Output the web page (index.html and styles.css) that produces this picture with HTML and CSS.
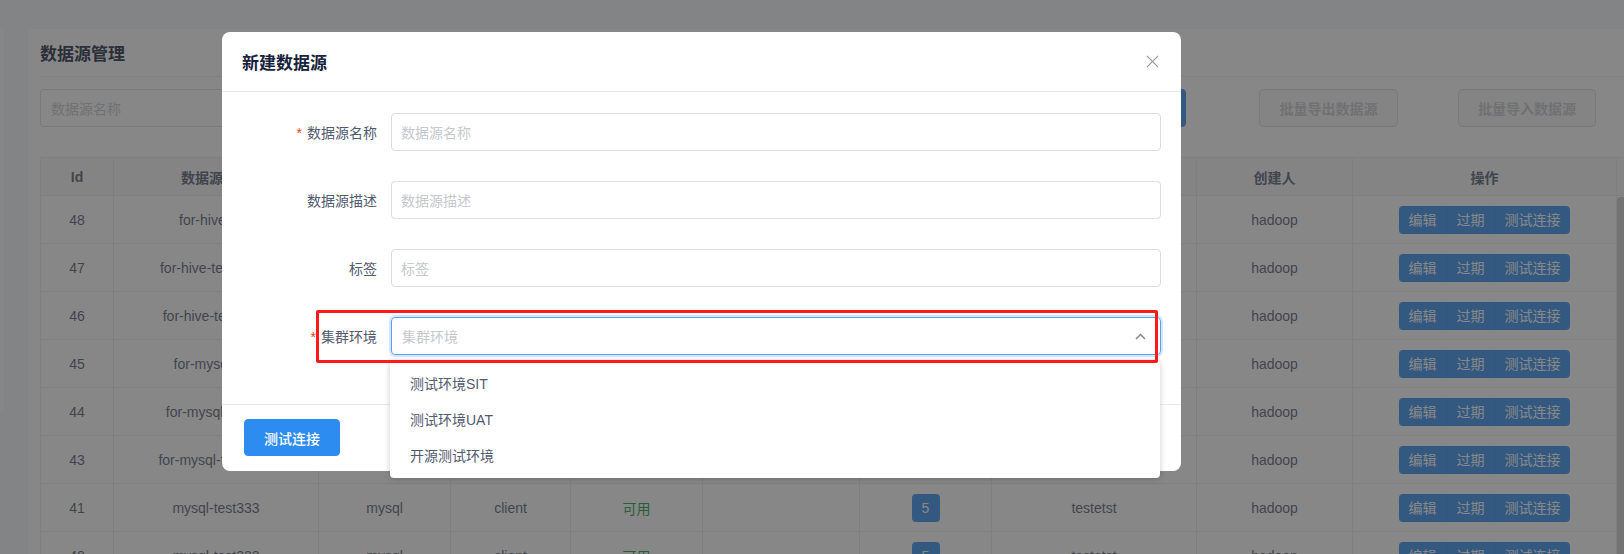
FILE: index.html
```html
<!DOCTYPE html>
<html lang="zh-CN">
<head>
<meta charset="utf-8">
<title>数据源管理</title>
<link rel="stylesheet" href="styles.css">
</head>
<body>
<div class="page">
  <aside class="side"></aside>
  <main class="card">
    <div class="card-head"><h2 class="card-title">数据源管理</h2></div>
    <div class="toolbar">
      <div class="search-input">数据源名称</div>
      <button class="btn btn-primary search-btn">查询</button>
      <button class="btn btn-disabled export-btn">批量导出数据源</button>
      <button class="btn btn-disabled import-btn">批量导入数据源</button>
    </div>
    <div class="table">
      <div class="tr thead">
        <div class="td">Id</div><div class="td">数据源名称</div><div class="td">数据源类型</div><div class="td">连接方式</div><div class="td">状态</div><div class="td">标签</div><div class="td">版本数</div><div class="td">描述</div><div class="td">创建人</div><div class="td">操作</div><div class="gutter"></div>
      </div>
      <div class="tbody-wrap">
        <div class="tbody">
          <div class="tr"><div class="td">48</div><div class="td">for-hive-test</div><div class="td">hive</div><div class="td">client</div><div class="td ok">可用</div><div class="td"></div><div class="td"><span class="badge">5</span></div><div class="td">testetst</div><div class="td">hadoop</div><div class="td"><div class="ops"><span>编辑</span><span>过期</span><span>测试连接</span></div></div></div>
          <div class="tr"><div class="td">47</div><div class="td">for-hive-test-new1</div><div class="td">hive</div><div class="td">client</div><div class="td ok">可用</div><div class="td"></div><div class="td"><span class="badge">5</span></div><div class="td">testetst</div><div class="td">hadoop</div><div class="td"><div class="ops"><span>编辑</span><span>过期</span><span>测试连接</span></div></div></div>
          <div class="tr"><div class="td">46</div><div class="td">for-hive-test-prod</div><div class="td">hive</div><div class="td">client</div><div class="td ok">可用</div><div class="td"></div><div class="td"><span class="badge">5</span></div><div class="td">testetst</div><div class="td">hadoop</div><div class="td"><div class="ops"><span>编辑</span><span>过期</span><span>测试连接</span></div></div></div>
          <div class="tr"><div class="td">45</div><div class="td">for-mysql-test</div><div class="td">mysql</div><div class="td">client</div><div class="td ok">可用</div><div class="td"></div><div class="td"><span class="badge">5</span></div><div class="td">testetst</div><div class="td">hadoop</div><div class="td"><div class="ops"><span>编辑</span><span>过期</span><span>测试连接</span></div></div></div>
          <div class="tr"><div class="td">44</div><div class="td">for-mysql-test01</div><div class="td">mysql</div><div class="td">client</div><div class="td ok">可用</div><div class="td"></div><div class="td"><span class="badge">5</span></div><div class="td">testetst</div><div class="td">hadoop</div><div class="td"><div class="ops"><span>编辑</span><span>过期</span><span>测试连接</span></div></div></div>
          <div class="tr"><div class="td">43</div><div class="td">for-mysql-test-new</div><div class="td">mysql</div><div class="td">client</div><div class="td ok">可用</div><div class="td"></div><div class="td"><span class="badge">5</span></div><div class="td">testetst</div><div class="td">hadoop</div><div class="td"><div class="ops"><span>编辑</span><span>过期</span><span>测试连接</span></div></div></div>
          <div class="tr"><div class="td">41</div><div class="td">mysql-test333</div><div class="td">mysql</div><div class="td">client</div><div class="td ok">可用</div><div class="td"></div><div class="td"><span class="badge">5</span></div><div class="td">testetst</div><div class="td">hadoop</div><div class="td"><div class="ops"><span>编辑</span><span>过期</span><span>测试连接</span></div></div></div>
          <div class="tr"><div class="td">40</div><div class="td">mysql-test222</div><div class="td">mysql</div><div class="td">client</div><div class="td ok">可用</div><div class="td"></div><div class="td"><span class="badge">5</span></div><div class="td">testetst</div><div class="td">hadoop</div><div class="td"><div class="ops"><span>编辑</span><span>过期</span><span>测试连接</span></div></div></div>
        </div>
        <div class="scrollbar"><div class="thumb"></div></div>
      </div>
    </div>
  </main>
</div>

<div class="mask"></div>

<div class="modal">
  <div class="modal-head">
    <div class="modal-title">新建数据源</div>
    <svg class="close" width="14" height="14" viewBox="0 0 14 14"><path d="M1 1L13 13M13 1L1 13" stroke="#999" stroke-width="1.3" fill="none"/></svg>
  </div>
  <div class="modal-body">
    <div class="form-item">
      <label class="label required">数据源名称</label>
      <div class="input">数据源名称</div>
    </div>
    <div class="form-item">
      <label class="label">数据源描述</label>
      <div class="input">数据源描述</div>
    </div>
    <div class="form-item">
      <label class="label">标签</label>
      <div class="input">标签</div>
    </div>
    <div class="form-item">
      <label class="label required">集群环境</label>
      <div class="input select">
        <span class="select-ph">集群环境</span>
        <svg class="arrow" width="11" height="7" viewBox="0 0 11 7"><path d="M1 6L5.5 1.5L10 6" stroke="#808695" stroke-width="1.5" fill="none"/></svg>
      </div>
    </div>
  </div>
  <div class="modal-foot">
    <button class="btn-test">测试连接</button>
  </div>
</div>

<ul class="dropdown">
  <li>测试环境SIT</li>
  <li>测试环境UAT</li>
  <li>开源测试环境</li>
</ul>

<div class="annot"></div>
</body>
</html>
```

FILE: styles.css
```css
* { box-sizing: border-box; margin: 0; padding: 0; }
html, body { width: 1624px; height: 554px; overflow: hidden; }
body {
  background: #f5f7f9;
  font-family: "Liberation Sans", "Noto Sans CJK SC", sans-serif;
  font-size: 14px;
  color: #515a6e;
  position: relative;
}

.page { display: flex; align-items: flex-start; padding-top: 29px; }
.side { flex: none; width: 4px; height: 381px; background: #fff; border-radius: 0 0 4px 0; }
.card {
  flex: none;
  width: 1596px;
  height: 620px;
  margin-left: 24px;
  padding-left: 12px;
  background: #fff;
  border-radius: 4px 0 0 0;
}
.card-head { height: 48px; border-bottom: 1px solid #e8eaec; display: flex; align-items: center; }
.card-title { font-size: 17px; font-weight: 700; color: #17233d; }

.toolbar { display: flex; margin-top: 12px; height: 38px; }
.search-input {
  width: 260px; height: 38px;
  border: 1px solid #dcdee2; border-radius: 4px;
  padding-left: 10px; display: flex; align-items: center; color: #c5c8ce;
}
.btn {
  height: 38px; border-radius: 4px; font-size: 14px; font-family: inherit;
  display: flex; align-items: center; justify-content: center;
}
.btn-primary { background: #2d8cf0; border: 1px solid #2d8cf0; color: #fff; }
.btn-disabled { background: #f7f7f7; border: 1px solid #dcdee2; color: #c5c8ce; font-weight: 700; }
.search-btn { margin-left: 806px; width: 80px; }
.export-btn { margin-left: 73px; width: 139px; }
.import-btn { margin-left: 60px; width: 138px; }

.table { margin-top: 30px; border-top: 1px solid #e8eaec; }
.tr { display: grid; grid-template-columns: 74px 205px 132px 120px 132px 157px 132px 205px 156px 264px; }
.thead { grid-template-columns: 74px 205px 132px 120px 132px 157px 132px 205px 156px 264px 20px; }
.td {
  height: 48px;
  border-right: 1px solid #e8eaec; border-bottom: 1px solid #e8eaec;
  display: flex; align-items: center; justify-content: center;
  white-space: nowrap; overflow: hidden;
  background: #fff;
}
.td:first-child { border-left: 1px solid #e8eaec; }
.thead .td { height: 38px; background: #f8f8f9; font-weight: 700; }
.gutter { height: 38px; background: #f8f8f9; border-bottom: 1px solid #e8eaec; }
.ok { color: #0c9a3c; }

.tbody-wrap { display: flex; }
.tbody { flex: none; width: 1577px; }
.scrollbar { flex: none; width: 20px; padding-top: 1px; }
.thumb { width: 9px; height: 400px; background: #cdcdcd; border-radius: 4px; }

.badge {
  width: 28px; height: 28px; border-radius: 4px;
  background: #2d8cf0; color: #fff;
  display: flex; align-items: center; justify-content: center;
}
.ops { display: flex; height: 28px; border-radius: 4px; overflow: hidden; }
.ops span { background: #2d8cf0; color: #fff; padding: 0 9.5px; line-height: 28px; }
.ops span + span { border-left: 1px solid rgba(0,0,0,0.08); }

.mask { position: absolute; inset: 0; background: rgba(55,55,55,0.6); }

.modal {
  position: absolute; left: 222px; top: 32px; width: 959px;
  background: #fff; border-radius: 8px;
}
.modal-head {
  height: 60px; border-bottom: 1px solid #e8eaec;
  display: flex; align-items: center; justify-content: space-between;
  padding: 0 22px 0 20px;
}
.modal-title { font-size: 17px; font-weight: 700; color: #17233d; }
.close { display: block; width: 13px; height: 13px; }

.modal-body { padding: 21px 20px 19px 0; }
.form-item { display: flex; align-items: center; height: 38px; margin-bottom: 30px; }
.label { flex: none; width: 169px; padding-right: 14px; text-align: right; color: #515a6e; }
.required::before { content: "*"; color: #ed4014; margin-right: 5px; }
.input {
  flex: 1; height: 38px;
  border: 1px solid #dcdee2; border-radius: 4px;
  padding-left: 9px; display: flex; align-items: center; color: #c5c8ce;
}
.select {
  border-color: #57a3f3;
  box-shadow: 0 0 0 2px rgba(45,140,240,0.2);
  justify-content: space-between; padding-left: 10px; padding-right: 14px;
}
.arrow { display: block; }

.modal-foot { border-top: 1px solid #e8eaec; padding: 14px 22px 15px; }
.btn-test {
  display: block; width: 96px; height: 37px;
  background: #2d8cf0; border: 1px solid #2d8cf0; border-radius: 4px;
  color: #fff; font-family: inherit; font-size: 14px; font-weight: 500;
}

.dropdown {
  position: absolute; left: 390px; top: 360px; width: 770px;
  list-style: none; background: #fff; border-radius: 4px;
  box-shadow: 0 1px 6px rgba(0,0,0,0.2);
  padding: 5px 0;
}
.dropdown li { height: 36px; padding: 0 20px; display: flex; align-items: center; color: #515a6e; }

.annot {
  position: absolute; left: 316px; top: 310px; width: 842px; height: 53px;
  border: 3px solid #ff1a1a; border-radius: 2px;
}
```
